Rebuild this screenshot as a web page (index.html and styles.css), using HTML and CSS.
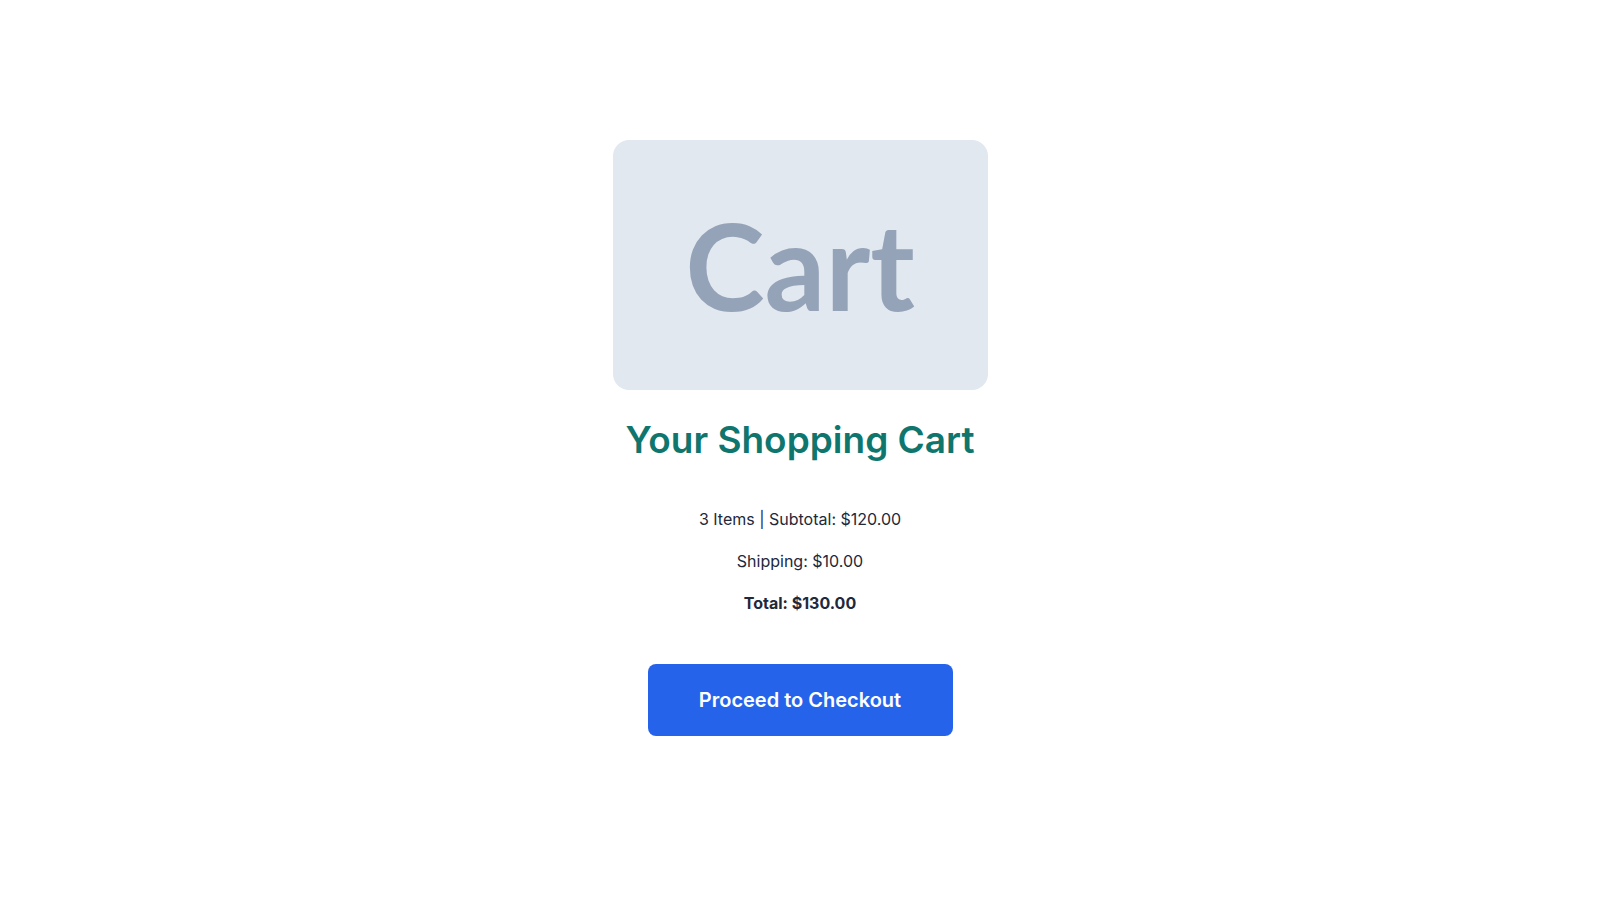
FILE: index.html
```html
<!DOCTYPE html>
<html lang="en">
<head>
    <meta charset="UTF-8">
    <meta name="viewport" content="width=device-width, initial-scale=1.0">
    <title>Your Shopping Cart</title>
    <link rel="stylesheet" href="styles.css">
</head>
<body>
    <main class="cart-page">
        <!-- Placeholder cart artwork -->
        <div class="cart-image">Cart</div>

        <h1 class="cart-title">Your Shopping Cart</h1>

        <div class="cart-summary">
            <p class="summary-line">3 Items | Subtotal: $120.00</p>
            <p class="summary-line">Shipping: $10.00</p>
            <p class="summary-line summary-total">Total: $130.00</p>
        </div>

        <button class="checkout-button">Proceed to Checkout</button>
    </main>
</body>
</html>
```

FILE: styles.css
```css
/* Basic styling */
body {
    font-family: Inter, "Noto Sans", sans-serif;
    background-color: #ffffff;
    color: #1e293b;
    margin: 0;
    padding: 0;
}

.cart-page {
    display: flex;
    flex-direction: column;
    align-items: center;
    padding-top: 140px;
}

.cart-image {
    width: 375px;
    height: 250px;
    background-color: #e2e8f0;
    border-radius: 16px;
    display: flex;
    align-items: center;
    justify-content: center;
    font-family: Lato, sans-serif;
    font-weight: bold;
    font-size: 120px;
    color: #94a3b8;
}

.cart-title {
    font-size: 37px;
    font-weight: 600;
    color: #0f766e;
    margin: 28px 0 0 0;
    line-height: 44px;
}

.cart-summary {
    margin-top: 45px;
    text-align: center;
}

.summary-line {
    font-size: 16px;
    line-height: 24px;
    margin: 0 0 18px 0;
}

.summary-total {
    font-weight: bold;
}

.checkout-button {
    margin-top: 31px;
    width: 305px;
    height: 72px;
    background-color: #2563eb;
    color: #ffffff;
    border: none;
    border-radius: 8px;
    font-family: inherit;
    font-size: 20px;
    font-weight: 600;
    cursor: pointer;
}
```
